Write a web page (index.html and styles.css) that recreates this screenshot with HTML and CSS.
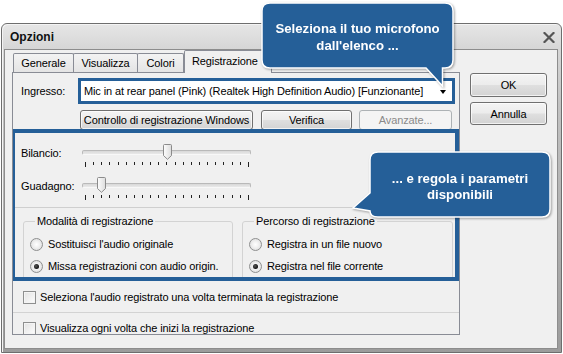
FILE: index.html
```html
<!DOCTYPE html>
<html>
<head>
<meta charset="utf-8">
<title>Opzioni</title>
<link rel="stylesheet" href="styles.css">
</head>
<body>
<div class="stage">
  <div class="window">
    <div class="titlebar">
      <span class="title">Opzioni</span>
      <svg class="close" width="12" height="11" viewBox="0 0 12 11"><path d="M1.5 1L10.5 10M10.5 1L1.5 10" stroke="#555" stroke-width="2.2" stroke-linecap="square"/></svg>
    </div>
    <div class="client">
      <div class="tabcol">
        <div class="tabstrip">
          <div class="tab t-gen">Generale</div>
          <div class="tab t-vis">Visualizza</div>
          <div class="tab t-col">Colori</div>
          <div class="tab tab-sel">Registrazione</div>
        </div>
        <div class="panel">
          <div class="row-input">
            <span class="lbl-in">Ingresso:</span>
            <div class="combo">
              <span>Mic in at rear panel (Pink) (Realtek High Definition Audio) [Funzionante]</span>
              <span class="arrow"></span>
            </div>
          </div>
          <div class="row-btns">
            <div class="btn b-ctrl">Controllo di registrazione Windows</div>
            <div class="btn b-ver">Verifica</div>
            <div class="btn b-adv disabled">Avanzate...</div>
          </div>
          <div class="hl">
            <div class="sliders">
              <div class="srow">
                <span class="slbl">Bilancio:</span>
                <div class="slider">
                  <div class="track"></div>
                  <svg class="thumb" style="left:81px" width="9" height="16" viewBox="0 0 9 16"><defs><linearGradient id="tg1" x1="0" y1="0" x2="1" y2="0"><stop offset="0" stop-color="#fdfdfd"/><stop offset="1" stop-color="#dcdcdc"/></linearGradient></defs><path d="M0.5 1.5Q0.5 0.5 1.5 0.5H7.5Q8.5 0.5 8.5 1.5V11.5L4.5 15.3L0.5 11.5Z" fill="url(#tg1)" stroke="#8b8b8b"/></svg>
                  <div class="ticks"><i></i><i></i><i></i><i></i><i></i><i></i><i></i><i></i><i></i><i></i><i></i><i></i><i></i><i></i><i></i><i></i><i></i><i></i><i></i><i></i><i></i></div>
                </div>
              </div>
              <div class="srow">
                <span class="slbl">Guadagno:</span>
                <div class="slider">
                  <div class="track"></div>
                  <svg class="thumb" style="left:15px" width="9" height="16" viewBox="0 0 9 16"><defs><linearGradient id="tg2" x1="0" y1="0" x2="1" y2="0"><stop offset="0" stop-color="#fdfdfd"/><stop offset="1" stop-color="#dcdcdc"/></linearGradient></defs><path d="M0.5 1.5Q0.5 0.5 1.5 0.5H7.5Q8.5 0.5 8.5 1.5V11.5L4.5 15.3L0.5 11.5Z" fill="url(#tg2)" stroke="#8b8b8b"/></svg>
                  <div class="ticks"><i></i><i></i><i></i><i></i><i></i><i></i><i></i><i></i><i></i><i></i><i></i><i></i><i></i><i></i><i></i><i></i><i></i><i></i><i></i><i></i><i></i></div>
                </div>
              </div>
            </div>
            <div class="sep"></div>
            <div class="groups">
              <fieldset class="grp g-left">
                <legend>Modalità di registrazione</legend>
                <div class="opt"><span class="radio"></span>Sostituisci l'audio originale</div>
                <div class="opt"><span class="radio on"></span>Missa registrazioni con audio origin.</div>
              </fieldset>
              <fieldset class="grp g-right">
                <legend>Percorso di registrazione</legend>
                <div class="opt"><span class="radio"></span>Registra in un file nuovo</div>
                <div class="opt"><span class="radio on"></span>Registra nel file corrente</div>
              </fieldset>
            </div>
          </div>
          <div class="chk chk1"><span class="box"></span>Seleziona l'audio registrato una volta terminata la registrazione</div>
          <div class="sep2"></div>
          <div class="chk chk2"><span class="box"></span>Visualizza ogni volta che inizi la registrazione</div>
        </div>
      </div>
      <div class="btncol">
        <div class="btn b-ok">OK</div>
        <div class="btn b-cancel">Annulla</div>
      </div>
    </div>
  </div>

  <div class="callout c1">
    <svg class="bubble" width="196" height="90" viewBox="0 0 196 90"><path d="M10 2H185Q193 2 193 10V59Q193 67 185 67H182.5V85L166 67H10Q2 67 2 59V10Q2 2 10 2Z" fill="#255f98" stroke="#fff" stroke-width="1.5"/></svg>
    <div class="ctext t1">Seleziona il tuo microfono<br>dall'elenco ...</div>
  </div>
  <div class="callout c2">
    <svg class="bubble" width="206" height="72" viewBox="0 0 206 72"><path d="M28 3H192Q200 3 200 11V60Q200 68 192 68H28Q20 68 20 62L3 59L20 44V11Q20 3 28 3Z" fill="#255f98" stroke="#fff" stroke-width="1.5"/></svg>
    <div class="ctext t2">... e regola i parametri<br>disponibili</div>
  </div>
</div>
</body>
</html>
```

FILE: styles.css
```css
* { box-sizing: border-box; }
html, body { margin: 0; padding: 0; }
body {
  background: #fff;
  width: 563px;
  height: 354px;
  overflow: hidden;
  font-family: "Liberation Sans", Arial, sans-serif;
  font-size: 11px;
  color: #000;
}
.stage {
  position: relative;
  width: 563px;
  height: 354px;
  padding: 23px 1px 0 1px;
}
.window {
  width: 561px;
  height: 330px;
  border: 1px solid #6e6e6e;
  border-radius: 6px 6px 0 0;
  background: linear-gradient(#e6e6e6 0, #d6d6d6 25px, #c2c2c2 80px, #9c9c9c 100%);
  padding: 0 3px 3px 2px;
  display: flex;
  flex-direction: column;
  box-shadow: inset 1px 1px 0 #f4f4f4;
}
.titlebar {
  height: 25px;
  display: flex;
  align-items: center;
  justify-content: space-between;
  padding: 0 3px 0 6px;
}
.title { font-weight: bold; font-size: 12px; color: #111; }
.close { display: block; margin-top: 1px; }
.client {
  height: 300px;
  border: 1px solid #8d8d8d;
  background: #f0f0f0;
  display: flex;
  gap: 10px;
  padding-left: 7px;
  letter-spacing: -0.12px;
}
.tabcol { width: 448px; }
.tabstrip {
  height: 22px;
  display: flex;
  align-items: flex-end;
  padding-left: 1px;
}
.tab {
  height: 19px;
  border: 1px solid #898c95;
  border-bottom: none;
  border-radius: 2px 2px 0 0;
  background: linear-gradient(#f3f3f3, #e4e4e4);
  display: flex;
  align-items: center;
  justify-content: center;
  padding-bottom: 1px;
}
.t-gen { width: 61px; }
.t-vis { width: 65px; margin-left: -1px; }
.t-col { width: 47px; margin-left: -1px; }
.tab-sel {
  width: 88px;
  height: 23px;
  margin-bottom: -1px;
  position: relative;
  z-index: 1;
  background: #f0f0f0;
  justify-content: flex-start;
  padding-left: 7px;
  padding-bottom: 3px;
}
.panel {
  height: 263px;
  border: 1px solid #898c95;
  background: #f0f0f0;
  overflow: hidden;
}
.row-input {
  display: flex;
  align-items: center;
  margin-top: 5px;
  height: 26px;
  padding-left: 8px;
}
.lbl-in { width: 57px; }
.combo {
  width: 377px;
  height: 26px;
  border: 3px solid #255f98;
  background: #fff;
  display: flex;
  align-items: center;
  justify-content: space-between;
  padding: 0 6px 0 3px;
}
.arrow {
  width: 0;
  height: 0;
  border-left: 3.5px solid transparent;
  border-right: 3.5px solid transparent;
  border-top: 4px solid #000;
  margin-top: 1px;
}
.row-btns {
  display: flex;
  margin-top: 6px;
  padding-left: 67px;
  height: 20px;
}
.btn {
  border: 1px solid #707070;
  border-radius: 3px;
  background: linear-gradient(#f4f4f4 0%, #ececec 48%, #dfdfdf 52%, #d3d3d3 100%);
  box-shadow: inset 0 0 0 1px rgba(255,255,255,0.7);
  display: flex;
  align-items: center;
  justify-content: center;
  height: 20px;
}
.b-ctrl { width: 173px; }
.b-ver { width: 91px; margin-left: 8px; }
.b-adv { width: 93px; margin-left: 7px; }
.disabled {
  border-color: #adb2b5;
  background: #f4f4f4;
  color: #8a8a8a;
  box-shadow: none;
}
.hl {
  margin: -1px 0 0 -2px;
  width: 448px;
  height: 152px;
  border: 4px solid #255f98;
  overflow: hidden;
  position: relative;
  z-index: 2;
}
.sliders {
  height: 74px;
  padding-top: 11px;
}
.srow {
  display: flex;
  height: 33px;
  padding-left: 6px;
}
.slbl { width: 61px; padding-top: 3px; line-height: 13px; }
.slider {
  position: relative;
  width: 170px;
  height: 26px;
}
.track {
  position: absolute;
  top: 6px;
  left: 0;
  width: 169px;
  height: 5px;
  border: 1px solid #b9b9b9;
  border-radius: 2px;
  background: linear-gradient(#d8d8d8, #e9e9e9);
  border-bottom-color: #f8f8f8;
}
.thumb {
  position: absolute;
  top: 0;
  display: block;
}
.ticks {
  position: absolute;
  top: 18px;
  left: 3px;
  width: 164px;
  height: 5px;
  display: flex;
  justify-content: space-between;
  align-items: flex-start;
}
.ticks i {
  display: block;
  width: 1px;
  height: 3px;
  background: #222;
}
.ticks i:first-child, .ticks i:last-child { height: 5px; }
.sep {
  border-top: 1px solid #cfcfcf;
}
.groups {
  display: flex;
  gap: 9px;
  padding-left: 8px;
  margin-top: 6px;
}
.grp {
  margin: 0;
  height: 75px;
  padding: 5px 0 0 6px;
  border: 1px solid #d3d3d3;
  border-radius: 3px;
  min-width: 0;
}
.g-left { width: 210px; }
.g-right { width: 211px; }
legend {
  margin-left: 5px;
  padding: 0 2px;
  line-height: 14px;
}
.opt {
  display: flex;
  align-items: center;
  height: 22px;
}
.radio {
  width: 13px;
  height: 13px;
  border: 1px solid #8e8f8f;
  border-radius: 50%;
  background: radial-gradient(circle at 50% 50%, #ffffff 0, #f1f1f1 40%, #d6d6d6 100%);
  margin-right: 5px;
  position: relative;
  flex: none;
}
.radio.on::after {
  content: "";
  position: absolute;
  left: 3px;
  top: 3px;
  width: 5px;
  height: 5px;
  border-radius: 50%;
  background: radial-gradient(circle at 40% 40%, #555 0, #111 70%);
}
.chk {
  display: flex;
  align-items: center;
  padding-left: 10px;
}
.chk1 { height: 22px; margin-top: 5px; }
.chk2 { height: 16px; margin-top: 7px; }
.box {
  width: 13px;
  height: 13px;
  border: 1px solid #8e8f8f;
  background: linear-gradient(135deg, #e2e2e2, #fdfdfd);
  box-shadow: inset 0 0 0 1px #f4f4f4;
  margin-right: 4px;
  flex: none;
}
.sep2 {
  margin-top: 4px;
  border-top: 1px solid #d3d3d3;
}
.btncol {
  width: 77px;
  padding-top: 23px;
  display: flex;
  flex-direction: column;
  gap: 5px;
}
.b-ok { height: 24px; }
.b-cancel { height: 23px; }
.callout {
  position: absolute;
  z-index: 5;
  filter: drop-shadow(1px 1px 1px rgba(0,0,0,0.35));
}
.c1 { left: 260px; top: 1px; width: 196px; height: 90px; }
.c2 { left: 350px; top: 149px; width: 206px; height: 72px; }
.bubble { position: absolute; left: 0; top: 0; display: block; }
.ctext {
  position: absolute;
  color: #fff;
  font-weight: bold;
  font-size: 13.2px;
  text-align: center;
}
.t1 { left: 2px; top: 19px; width: 191px; line-height: 17px; }
.t2 { left: 20px; top: 22px; width: 180px; line-height: 16px; }
```
